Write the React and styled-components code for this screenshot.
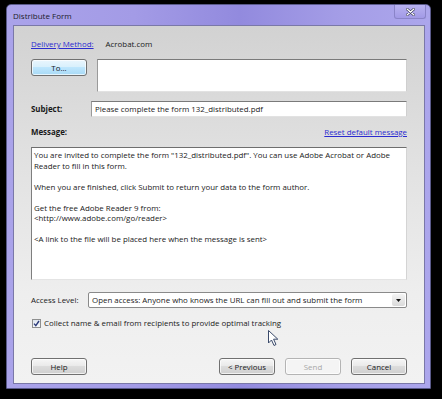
import styled, { createGlobalStyle } from 'styled-components'

const Global = createGlobalStyle`
	html, body {
		margin: 0;
		padding: 0;
		background: #000;
		width: 442px;
		height: 399px;
		overflow: hidden;
	}
	* {
		box-sizing: border-box;
	}
`

const message = `You are invited to complete the form "132_distributed.pdf". You can use Adobe Acrobat or Adobe Reader to fill in this form.

When you are finished, click Submit to return your data to the form author.

Get the free Adobe Reader 9 from:
<http://www.adobe.com/go/reader>

<A link to the file will be placed here when the message is sent>`

const App = () => {
	return (
		<>
			<Global />
			<Window>
				<TitleBar>
					<Title>Distribute Form</Title>
					<CloseButton>
						<svg width='9' height='8' viewBox='0 0 9 8'>
							<path d='M1 1 L8 7 M8 1 L1 7' stroke='#3a3a5a' strokeWidth='2.6' strokeLinecap='round' />
							<path d='M1 1 L8 7 M8 1 L1 7' stroke='#ffffff' strokeWidth='1.3' strokeLinecap='round' />
						</svg>
					</CloseButton>
				</TitleBar>
				<Content>
					<DeliveryRow>
						<Link>Delivery Method:</Link>
						<span>Acrobat.com</span>
					</DeliveryRow>
					<ToRow>
						<Button $blue>To...</Button>
						<Field $tall />
					</ToRow>
					<FieldRow>
						<Label $width={60}>Subject:</Label>
						<Field>Please complete the form 132_distributed.pdf</Field>
					</FieldRow>
					<MessageHead>
						<Label>Message:</Label>
						<Link>Reset default message</Link>
					</MessageHead>
					<MessageBox>{message}</MessageBox>
					<FieldRow $top={12}>
						<PlainLabel $width={57}>Access Level:</PlainLabel>
						<Select>
							<span>Open access: Anyone who knows the URL can fill out and submit the form</span>
							<SelectArrow>
								<svg width='5' height='3' viewBox='0 0 5 3'>
									<path d='M0 0 H5 L2.5 3 Z' fill='#111' />
								</svg>
							</SelectArrow>
						</Select>
					</FieldRow>
					<CheckRow>
						<CheckBox>
							<svg width='7' height='7' viewBox='0 0 7 7'>
								<path d='M1 3.6 L2.8 5.6 L6 1' stroke='#2a3a7a' strokeWidth='1.4' fill='none' />
							</svg>
						</CheckBox>
						<span>Collect name &amp; email from recipients to provide optimal tracking</span>
					</CheckRow>
					<Cursor>
						<svg width='11' height='17' viewBox='0 0 11 17'>
							<path d='M0.5 0.5 L0.5 13 L3.5 10 L6 15.5 L8 14.5 L5.6 9.2 L9.8 9.2 Z' fill='#ffffff' stroke='#3a4a6a' strokeWidth='1' />
						</svg>
					</Cursor>
					<ButtonBar>
						<Button>Help</Button>
						<ButtonGroup>
							<Button>&lt; Previous</Button>
							<Button $disabled>Send</Button>
							<Button>Cancel</Button>
						</ButtonGroup>
					</ButtonBar>
				</Content>
			</Window>
		</>
	)
}

export default App

const Window = styled.div`
	position: relative;
	margin: 4px 0 0 6px;
	width: 425px;
	height: 385px;
	display: flex;
	flex-direction: column;
	padding: 0 5px 4px 6px;
	border: 1px solid #5a5a8a;
	border-radius: 5px 5px 0 0;
	background: linear-gradient(90deg, #aaa3ea 0%, #a39be6 30%, #928ade 55%, #a59ee7 80%, #aca6ec 100%);
	font-family: 'Open Sans', 'DejaVu Sans', sans-serif;
	font-size: 7.9px;
	color: #1a1a1a;
`

const TitleBar = styled.div`
	height: 20px;
	display: flex;
	align-items: flex-start;
	justify-content: space-between;
`

const Title = styled.div`
	padding: 5px 0 0 0;
	font-size: 8px;
	color: #1c1c2c;
`

const CloseButton = styled.div`
	width: 32px;
	height: 14px;
	margin-right: -1px;
	display: flex;
	align-items: center;
	justify-content: center;
	border: 1px solid #8a84c8;
	border-top: none;
	border-radius: 0 0 3px 3px;
	background: linear-gradient(180deg, #b8b2f0, #a29ae6);
`

const Content = styled.div`
	position: relative;
	flex: 1;
	display: flex;
	flex-direction: column;
	padding: 0 17px 8px 17px;
	border: 1px solid #7a78a8;
	background: linear-gradient(180deg, #d2d2d2 0%, #e2e2e2 40%, #eeeeee 75%, #f2f2f2 100%);
`

const DeliveryRow = styled.div`
	display: flex;
	gap: 12px;
	align-items: center;
	height: 12px;
	margin-top: 12px;
`

const Link = styled.span`
	color: #2b2bd0;
	text-decoration: underline;
`

const ToRow = styled.div`
	display: flex;
	gap: 10px;
	margin-top: 9px;
`

const Button = styled.div`
	width: 56px;
	height: 17px;
	display: flex;
	align-items: center;
	justify-content: center;
	border: 1px solid ${(p) => (p.$disabled ? '#b4b4b4' : '#707070')};
	border-radius: 3px;
	background: ${(p) =>
		p.$blue
			? 'linear-gradient(180deg, #eaf6fd 0%, #d9f0fc 45%, #bee6fd 50%, #a7d9f5 100%)'
			: p.$disabled
			? '#f4f4f4'
			: 'linear-gradient(180deg, #f6f6f6 0%, #eaeaea 45%, #dcdcdc 50%, #cfcfcf 100%)'};
	color: ${(p) => (p.$disabled ? '#a8a8a8' : '#1a1a1a')};
	box-shadow: inset 0 0 0 1px rgba(255, 255, 255, 0.7);
`

const Field = styled.div`
	flex: 1;
	height: ${(p) => (p.$tall ? '33px' : '16px')};
	display: flex;
	align-items: center;
	padding: 0 3px;
	background: #fff;
	border: 1px solid;
	border-color: #7a7a7a #cfcfcf #e2e2e2 #9a9a9a;
	white-space: nowrap;
	overflow: hidden;
`

const FieldRow = styled.div`
	display: flex;
	align-items: center;
	margin-top: ${(p) => p.$top ?? 9}px;
`

const Label = styled.span`
	width: ${(p) => (p.$width ? `${p.$width}px` : 'auto')};
	flex-shrink: 0;
	font-weight: 700;
`

const PlainLabel = styled.span`
	width: ${(p) => p.$width}px;
	flex-shrink: 0;
`

const MessageHead = styled.div`
	display: flex;
	justify-content: space-between;
	align-items: center;
	height: 12px;
	margin-top: 9px;
`

const MessageBox = styled.div`
	height: 133px;
	margin-top: 9px;
	padding: 2px 2px;
	background: #fff;
	border: 1px solid;
	border-color: #6e6e6e #d4d4d4 #e4e4e4 #7e7e7e;
	white-space: pre-wrap;
	line-height: 10.5px;
`

const Select = styled.div`
	flex: 1;
	height: 16px;
	display: flex;
	align-items: center;
	justify-content: space-between;
	padding: 0 1px 0 3px;
	background: #fff;
	border: 1px solid #8a8a8a;
	border-radius: 2px;
	white-space: nowrap;
`

const SelectArrow = styled.div`
	width: 13px;
	height: 12px;
	display: flex;
	align-items: center;
	justify-content: center;
	border-radius: 2px;
	background: linear-gradient(180deg, #f4f4f4, #dadada);
`

const CheckRow = styled.div`
	display: flex;
	align-items: center;
	gap: 3px;
	margin-top: 10px;
	padding-left: 1px;
`

const CheckBox = styled.div`
	width: 9px;
	height: 9px;
	display: flex;
	align-items: center;
	justify-content: center;
	border: 1px solid #8e8f8f;
	background: linear-gradient(180deg, #e0e6ee, #f6f8fa);
`

const Cursor = styled.div`
	position: absolute;
	left: 254px;
	top: 304px;
	line-height: 0;
`

const ButtonBar = styled.div`
	margin-top: auto;
	display: flex;
	justify-content: space-between;
`

const ButtonGroup = styled.div`
	display: flex;
	gap: 10px;
`
